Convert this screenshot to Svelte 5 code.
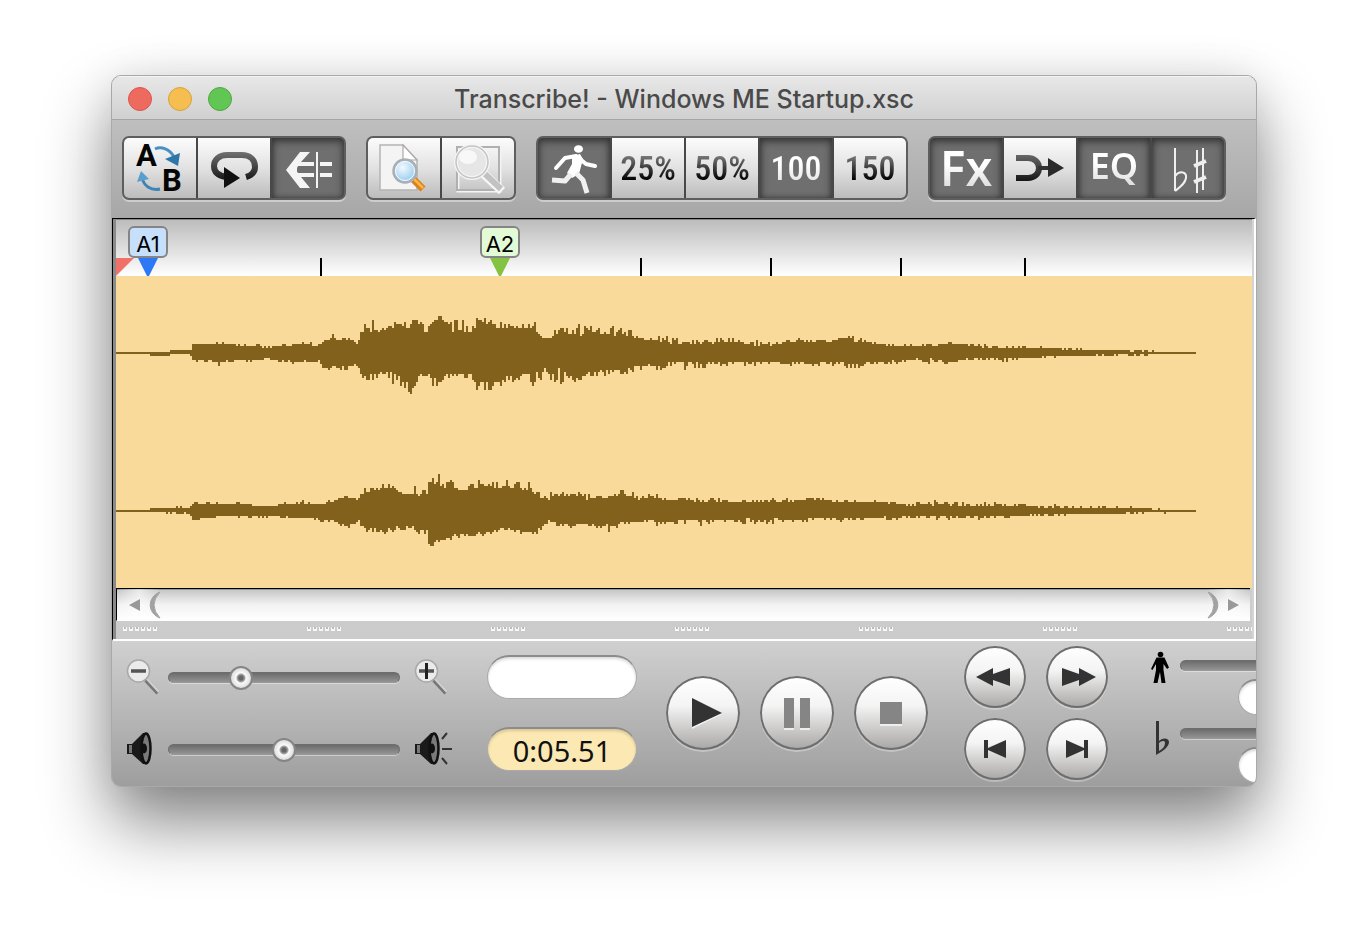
<script>
  const title = 'Transcribe! - Windows ME Startup.xsc';
  const VIEW = 1136;

  // Envelope points: x, quiet/loud amplitude above the axis, quiet/loud amplitude below it
  const left = [
    [0,1,1,1,1],[33,1,1,1,1],[34,1,1,2,3],[50,1,2,2,3],[58,3,3,1,2],[70,3,3,1,2],[74,1,3,2,3],[76,9,9,7,8],
    [94,9,9,7,9],[102,9,12,9,14],[114,8,9,7,9],[134,6,9,7,9],[150,5,8,5,7],[164,6,10,7,9],[180,8,10,8,11],
    [193,8,13,7,11],[203,6,8,7,9],[206,11,13,15,17],[217,13,21,12,17],[230,13,18,13,17],[241,9,10,11,13],
    [244,19,22,17,25],[249,21,30,22,31],[256,20,33,20,30],[270,22,30,19,31],[284,22,33,20,36],[294,24,33,33,41],
    [303,28,35,21,28],[309,19,23,21,26],[314,27,37,22,36],[325,33,37,22,35],[332,19,29,20,29],[343,22,37,20,27],
    [354,20,26,20,25],[360,28,36,29,37],[376,24,34,27,37],[390,24,32,21,32],[404,25,30,21,28],[418,23,35,19,35],
    [428,13,22,15,21],[440,17,25,11,34],[450,18,30,21,33],[462,18,30,25,28],[475,17,29,17,26],[490,17,29,17,28],
    [505,17,28,17,24],[519,14,20,13,21],[528,11,15,11,14],[540,12,17,13,18],[552,9,17,8,14],[573,9,17,9,23],
    [594,9,15,9,15],[616,9,15,9,12],[640,7,13,9,14],[655,7,12,7,11],[665,10,15,10,13],[690,10,14,8,12],
    [715,10,14,9,14],[725,15,17,9,14],[738,11,16,11,15],[749,10,14,10,13],[755,9,11,8,11],[764,8,10,9,12],
    [784,6,9,7,10],[808,6,9,5,10],[820,7,12,6,11],[829,9,13,10,13],[844,8,10,6,9],[870,5,9,5,8],[884,5,7,5,9],
    [904,5,7,5,7],[934,4,6,3,5],[962,3,5,3,3],[990,3,3,1,3],[1006,2,3,1,3],[1030,1,3,1,3],[1050,1,1,1,2],[1055,1,1,1,1],[1080,1,1,1,1]
  ];
  const right = [
    [0,1,1,1,1],[33,1,1,1,1],[34,3,3,1,1],[50,2,4,1,3],[58,3,5,1,3],[73,3,3,2,3],[76,7,9,8,9],[98,7,9,6,8],
    [112,6,7,4,6],[122,6,9,5,7],[134,5,7,5,9],[154,4,6,4,6],[167,7,9,5,7],[184,7,11,7,8],[194,7,10,6,9],
    [204,6,9,9,12],[219,9,12,9,11],[225,13,17,13,18],[234,12,14,12,16],[242,11,13,9,11],[245,18,21,15,22],
    [255,16,25,17,22],[264,21,28,18,23],[272,23,27,17,23],[285,16,23,15,19],[295,15,26,15,25],[310,16,23,18,25],
    [312,29,37,32,37],[321,24,37,29,34],[330,23,29,25,29],[341,21,34,22,28],[350,21,28,22,26],[365,24,33,20,26],
    [368,25,39,20,26],[380,23,33,15,25],[394,22,30,17,22],[407,21,31,20,25],[420,17,26,20,25],[426,11,18,13,19],
    [432,11,20,9,13],[442,13,18,9,15],[454,15,19,15,19],[464,12,19,12,15],[476,11,16,12,14],[488,12,16,13,23],
    [500,14,21,11,18],[512,15,21,11,14],[526,10,16,9,12],[543,12,21,10,17],[550,10,12,9,12],[567,12,17,8,15],
    [582,9,13,8,16],[597,9,14,8,12],[612,9,12,8,11],[634,8,10,6,14],[650,9,14,7,14],[674,9,13,8,11],
    [690,12,14,8,12],[704,11,14,6,8],[719,9,12,8,11],[740,9,10,6,9],[760,9,11,6,10],[790,5,9,5,8],[818,6,11,5,9],
    [840,5,9,5,9],[870,5,9,5,9],[910,4,8,3,7],[942,3,7,3,5],[970,3,5,2,4],[1000,2,5,2,4],[1030,2,3,1,3],[1050,1,2,1,2],[1056,1,1,1,1],[1080,1,1,1,1]
  ];

  function trace(points, axis, seed) {
    let s = seed;
    const rnd = () => {
      s = (s * 16807) % 2147483647;
      return s / 2147483647;
    };
    const snap = (v) => 1 + 2 * Math.round((v - 1) / 2);
    let d = '';
    let i = 0;
    for (let x = 0; x < 1080; x += 2) {
      while (points[i + 1][0] <= x) i++;
      const a = points[i];
      const b = points[i + 1];
      const t = (x - a[0]) / (b[0] - a[0]);
      const at = (k) => a[k] + (b[k] - a[k]) * t;
      const up = snap(at(1) + (at(2) - at(1)) * rnd() ** 1.5);
      const down = snap(at(3) + (at(4) - at(3)) * rnd() ** 1.5);
      d += `M${x} ${axis - up}h2v${up + down}h-2z`;
    }
    return d;
  }
  const wave = trace(left, 77, 4211) + trace(right, 235, 977);

  const ticks = [205, 525, 655, 785, 909];
  const markers = [
    { name: 'A1', at: 32, kind: 'blue' },
    { name: 'A2', at: 384, kind: 'green' }
  ];
  const pct = (v) => (v / VIEW) * 100 + '%';

  const groups = [
    [{ id: 'ab', label: 'Swap A and B' }, { id: 'loop', label: 'Loop' }, { id: 'back', label: 'Step back', on: true }],
    [{ id: 'find', label: 'Zoom to selection' }, { id: 'fit', label: 'Zoom to fit', off: true }],
    [
      { id: 'run', label: 'Speed', on: true },
      { id: 's25', text: '25%' },
      { id: 's50', text: '50%' },
      { id: 's100', text: '100', on: true },
      { id: 's150', text: '150' }
    ],
    [
      { id: 'fx', text: 'Fx', on: true, size: 'fx' },
      { id: 'mono', label: 'Mono mix' },
      { id: 'eq', text: 'EQ', on: true, size: 'eq' },
      { id: 'pitch', label: 'Pitch', on: true }
    ]
  ];

  let zoom = $state(29);
  let volume = $state(50);
  let speed = $state(50);
  let pitch = $state(50);
</script>

{#snippet glyph(id)}
  <svg width="72" height="60" viewBox="0 0 72 60" aria-hidden="true">
    <defs>
      <linearGradient id="dark" x1="0" y1="12" x2="0" y2="48" gradientUnits="userSpaceOnUse"><stop offset="0" stop-color="#777" /><stop offset="1" stop-color="#050505" /></linearGradient>
      <radialGradient id="lens" cx=".4" cy=".35" r=".7"><stop offset="0" stop-color="#f2faff" /><stop offset="1" stop-color="#8fc6ec" /></radialGradient>
    </defs>
    {#if id === 'ab'}
      <text x="12" y="28" class="letter">A</text>
      <text x="38" y="53" class="letter">B</text>
      <path d="M31 11C37 8 46 11 50 19" fill="none" stroke="#4b8fc0" stroke-width="3" />
      <path d="M41 21L56 15L54 28Z" fill="#2f75a8" />
      <path d="M36 51C27 53 20 48 18 40" fill="none" stroke="#3d83b5" stroke-width="3" />
      <path d="M13 44L17 33L25 41Z" fill="#5b9dcc" />
    {:else if id === 'loop'}
      <path d="M48 39C55 37 57 33 57 29C57 21 51 17 44 17H29C21 17 16 22 16 28C16 34 20 38 29 39" fill="none" stroke="url(#dark)" stroke-width="6" />
      <path d="M26 29L42 40L26 50Z" fill="#111" />
    {:else if id === 'back'}
      <path d="M14 32L28 14H38L29 24H42V28H26L24 32L26 35H42V39H29L38 50H28Z" fill="#f4f4f4" />
      <path d="M44 14h2v36h-2zM48 24h12v4h-12zM48 35h12v4h-12z" fill="#f4f4f4" />
      <path d="M16 32L28 17H33L25 28V36L33 47H28Z" fill="#f4f4f4" />
    {:else if id === 'find'}
      <path d="M12 7H35L49 22V52H12Z" fill="#f4f4f4" stroke="#b4b4b4" stroke-width="1.5" />
      <path d="M35 7V22H49Z" fill="#fff" stroke="#aaa" stroke-width="1.2" />
      <path d="M45 41L55 51" stroke="#d9811e" stroke-width="7" />
      <path d="M45 40L55 50" stroke="#ffb648" stroke-width="2.5" />
      <circle cx="37" cy="33" r="11.5" fill="url(#lens)" stroke="#a9b0b5" stroke-width="2.5" />
      <circle cx="37" cy="33" r="9.5" fill="none" stroke="#f5fbff" stroke-width="1" />
    {:else if id === 'fit'}
      <rect x="16" y="10" width="42" height="43" fill="none" stroke="#f4f4f4" stroke-width="3" />
      <rect x="15" y="9" width="42" height="43" fill="none" stroke="#b0b0b0" stroke-width="2" />
      <path d="M42 36L60 53" stroke="#f7f7f7" stroke-width="9" />
      <path d="M42 35L59 51" stroke="#c2c2c2" stroke-width="6" />
      <circle cx="30" cy="24" r="16" fill="#e6e6e6" stroke="#f5f5f5" stroke-width="4" />
      <circle cx="30" cy="24" r="16" fill="none" stroke="#c4c4c4" stroke-width="1.500" />
      <ellipse cx="26" cy="19" rx="9" ry="7" fill="#f8f8f8" />
    {:else if id === 'run'}
      <ellipse cx="40.500" cy="11" rx="4.500" ry="3.800" fill="#fff" />
      <path d="M38 18L27 20L18 30M42 21L48 26L57 28" fill="none" stroke="#fff" stroke-width="4" stroke-linecap="round" stroke-linejoin="round" />
      <path d="M34 18L42 16L45 21L41 36L34 40L29 35L34 26Z" fill="#fff" />
      <path d="M33 36L27 43L14 42M38 35L45 42L49 55" fill="none" stroke="#f0f0f0" stroke-width="5" stroke-linejoin="round" />
    {:else if id === 'mono'}
      <path d="M12 20H24C30 20 35 24 35 30C35 36 30 40 24 40H12" fill="none" stroke="url(#dark)" stroke-width="6" />
      <path d="M34 28H45V32H34Z" fill="#333" />
      <path d="M44 20L60 30L44 39Z" fill="#2a2a2a" />
    {:else}
      <path d="M23 10V53M23 38C28 32 35 34 34 40C33 46 28 49 23 53" fill="none" stroke="#f0f0f0" stroke-width="2" />
      <path d="M45 12V55M51 10V52" fill="none" stroke="#eee" stroke-width="2" />
      <path d="M42 28L54 23M42 44L54 39" fill="none" stroke="#eee" stroke-width="4" />
    {/if}
  </svg>
{/snippet}

{#snippet lens(plus)}
  <svg width="36" height="40" viewBox="0 0 36 40" aria-hidden="true">
    <path d="M20 23L32 36" stroke="#777" stroke-width="4.500" />
    <path d="M21 22L33 35" stroke="#d2d2d2" stroke-width="2" />
    <circle cx="12.500" cy="14" r="11" fill="#ebebeb" stroke="#a8a8a8" stroke-width="1.500" />
    <path d="M5 14h15" stroke="#555" stroke-width="3.500" />
    {#if plus}<path d="M12.500 6v16" stroke="#222" stroke-width="3" />{/if}
  </svg>
{/snippet}

{#snippet speaker(loud)}
  <svg width="38" height="36" viewBox="0 0 38 36" aria-hidden="true">
    <path d="M1 13H6L17 2H22V33H17L6 23H1Z" fill="#1a1a1a" />
    <path d="M3 14h3v8h-3z" fill="#777" />
    <ellipse cx="20" cy="17.500" rx="4.500" ry="15" fill="#7a7a7a" stroke="#111" stroke-width="2.500" />
    <ellipse cx="18" cy="17.500" rx="3" ry="5" fill="#111" />
    {#if loud}<path d="M28 8L33 2M28 18H38M28 27L33 33" stroke="#333" stroke-width="2" />{/if}
  </svg>
{/snippet}

<main class="window">
  <header class="titlebar">
    <div class="lights">
      <button class="light red" aria-label="Close"></button>
      <button class="light yellow" aria-label="Minimise"></button>
      <button class="light lime" aria-label="Full screen"></button>
    </div>
    <h1>{title}</h1>
  </header>

  <div class="toolbar">
    {#each groups as group}
      <div class="group">
        {#each group as b}
          <button class="tool {b.size ?? ''}" class:on={b.on} disabled={b.off} aria-label={b.label ?? b.text}>
            {#if b.text}<span>{b.text}</span>{:else}{@render glyph(b.id)}{/if}
          </button>
        {/each}
      </div>
    {/each}
  </div>

  <section class="editor">
    <div class="ruler">
      <i class="origin"></i>
      {#each ticks as t}<i class="tick" style:left={pct(t)}></i>{/each}
      {#each markers as m}
        <button class="marker {m.kind}" style:left={pct(m.at)}>
          <span>{m.name}</span>
          <svg width="20" height="18" viewBox="0 0 20 18" aria-hidden="true"><path d="M0 0H20L11 18H9Z" /></svg>
        </button>
      {/each}
    </div>
    <svg class="wave" viewBox="0 0 {VIEW} 312" preserveAspectRatio="none" aria-hidden="true">
      <path d={wave} fill="#82611c" shape-rendering="crispEdges" />
    </svg>
    <div class="scroll">
      <button aria-label="Scroll left"><svg width="44" height="30" viewBox="0 0 44 30"><path d="M12 15L23 9V21Z" fill="#999" /><path d="M43 2C30 7 30 23 43 28Q31 15 43 2Z" fill="#a2a2a2" stroke="#a2a2a2" /></svg></button>
      <div class="thumb"></div>
      <button aria-label="Scroll right"><svg width="44" height="30" viewBox="0 0 44 30"><path d="M33 15L22 9V21Z" fill="#999" /><path d="M2 2C15 7 15 23 2 28Q14 15 2 2Z" fill="#a2a2a2" stroke="#a2a2a2" /></svg></button>
    </div>
    <svg class="grip" height="18" aria-hidden="true">
      <defs>
        <pattern id="dots" x="7" y="0" width="184" height="18" patternUnits="userSpaceOnUse">
          {#each [0, 6, 12, 18, 24, 30] as x}
            <rect {x} y="6" width="4" height="4" fill="#f8f8f8" /><rect x={x + 1} y="6" width="2" height="2" fill="#bbb" />
          {/each}
        </pattern>
      </defs>
      <rect width="100%" height="18" fill="url(#dots)" />
    </svg>
  </section>

  <footer class="deck">
    <div class="levels">
      {@render lens(false)}
      <input type="range" bind:value={zoom} aria-label="Zoom" />
      {@render lens(true)}
      {@render speaker(false)}
      <input type="range" bind:value={volume} aria-label="Volume" />
      {@render speaker(true)}
    </div>

    <div class="readouts">
      <input class="pill" type="text" aria-label="Chord" />
      <output class="pill time">0:05.51</output>
    </div>

    <div class="transport">
      <button class="round big" aria-label="Play"><svg width="74" height="74" viewBox="0 0 74 74"><path d="M26 24L56 38L26 53Z" fill="#fff" opacity=".7" /><path d="M26 22L56 37L26 51Z" fill="#333" /></svg></button>
      <button class="round big" aria-label="Pause"><svg width="74" height="74" viewBox="0 0 74 74"><path d="M24 24h10v30h-10zM40 24h10v30h-10z" fill="#eee" /><path d="M24 22h10v30h-10zM40 22h10v30h-10z" fill="#858585" /></svg></button>
      <button class="round big" aria-label="Stop"><svg width="74" height="74" viewBox="0 0 74 74"><path d="M26 28h22v22h-22z" fill="#eee" /><path d="M26 26h22v22h-22z" fill="#858585" /></svg></button>
    </div>

    <div class="skips">
      <button class="round" aria-label="Rewind"><svg width="62" height="62" viewBox="0 0 62 62"><path d="M12 31L29 22V28L46 22V40L29 34V40Z" fill="#333" /></svg></button>
      <button class="round" aria-label="Fast forward"><svg width="62" height="62" viewBox="0 0 62 62"><path d="M50 31L33 22V28L16 22V40L33 34V40Z" fill="#333" /></svg></button>
      <button class="round" aria-label="Previous marker"><svg width="62" height="62" viewBox="0 0 62 62"><path d="M20 22h4v8L42 22V40L24 32V40H20Z" fill="#333" /></svg></button>
      <button class="round" aria-label="Next marker"><svg width="62" height="62" viewBox="0 0 62 62"><path d="M42 22h-4v8L20 22V40L38 32V40H42Z" fill="#333" /></svg></button>
    </div>

    <div class="tuning">
      <div class="tune">
        <svg width="20" height="34" viewBox="0 0 20 34" aria-hidden="true"><circle cx="10.500" cy="3.500" r="2.800" /><path d="M6.500 6.500h8l4.500 10-2 1.500-3.500-5v6l2 13h-4l-1.500-11-2.500 11H3.500L6 19v-6l-3.500 6-1.500-1z" /></svg>
        <div class="field"><input type="range" bind:value={speed} aria-label="Speed" /><input class="pill" type="text" aria-label="Speed value" /></div>
      </div>
      <div class="tune">
        <svg width="20" height="36" viewBox="0 0 20 36" aria-hidden="true"><path d="M6 2h3v20c4-4 10-3 10 1 0 5-6 9-13 13zM9 24v8c4-2 6-5 6-8 0-3-4-2-6 0z" fill="#333" fill-rule="evenodd" /></svg>
        <div class="field"><input type="range" bind:value={pitch} aria-label="Pitch" /><input class="pill" type="text" aria-label="Pitch value" /></div>
      </div>
    </div>
  </footer>
</main>

<style>
  :global(body) {
    display: flow-root;
    min-height: 100vh;
    background: #fff;
  }
  .window, .window :global(*) {
    box-sizing: border-box;
  }
  .window {
    margin: 75px 111px;
    border: 1px solid #a9a9a9;
    border-radius: 10px;
    overflow: hidden;
    font-family: Inter, "Liberation Sans", sans-serif;
    background: #bbb;
    box-shadow: 0 36px 68px rgba(0, 0, 0, 0.48), 0 0 40px rgba(0, 0, 0, 0.08);
  }
  button {
    padding: 0;
    border: 0;
    background: none;
    color: inherit;
    font: inherit;
  }
  svg {
    display: block;
    flex: none;
  }

  .titlebar {
    display: grid;
    grid-template-columns: 1fr auto 1fr;
    align-items: center;
    height: 44px;
    padding: 2px 16px 0;
    border-bottom: 1px solid #a5a5a5;
    background: linear-gradient(#e8e8e8, #d0d0d0);
    box-shadow: inset 0 1px #f4f4f4;
  }
  .lights {
    display: flex;
    gap: 16px;
  }
  .light {
    width: 24px;
    height: 24px;
    border: 1px solid;
    border-radius: 50%;
  }
  .red { background: #ee6a5f; border-color: #d6584d; }
  .yellow { background: #f6be50; border-color: #d8a23c; }
  .lime { background: #62c655; border-color: #4fa73f; }
  h1 {
    margin: 0;
    font-size: 25px;
    line-height: 30px;
    font-weight: 500;
    color: #4a4a4a;
    white-space: nowrap;
  }

  .toolbar {
    display: flex;
    gap: 20px;
    padding: 16px 10px 18px;
    background: linear-gradient(#bfbfbf, #a7a7a7);
  }
  .group {
    display: flex;
    gap: 2px;
    border: 2px solid #5e5e5e;
    border-radius: 7px;
    overflow: hidden;
    background: #484848;
    box-shadow: 0 2px rgba(255, 255, 255, 0.4);
  }
  .tool {
    display: grid;
    place-items: center;
    width: 72px;
    height: 60px;
    background: linear-gradient(#fcfcfc, #e2e2e2 50%, #bcbcbc);
    font: 500 34px "Liberation Sans Narrow", "Roboto Condensed", sans-serif;
  }
  .tool span {
    background: linear-gradient(#777 20%, #000 80%);
    background-clip: text;
    color: transparent;
    line-height: 40px;
  }
  .tool.on {
    background: #6f6f6f;
    box-shadow: inset 0 3px 8px #333, inset 0 0 5px #444;
  }
  .tool.on span {
    background: linear-gradient(#fff 40%, #ddd);
    background-clip: text;
  }
  .tool.fx { font: 600 48px "Noto Sans", sans-serif; }
  .tool.eq { font: 600 36px "Noto Sans", sans-serif; padding-bottom: 4px; }
  .letter {
    font: 700 31px Roboto, sans-serif;
    fill: #050505;
  }

  .editor {
    padding: 0 2px 0 3px;
    border: 1px solid #000;
    border-right: 2px solid #fff;
    border-bottom: 2px solid #fff;
    box-shadow: inset 3px 0 #8a8a8a, inset -2px 0 #d4d4d4;
    background: linear-gradient(#dedede, #cbcbcb);
  }
  .ruler {
    position: relative;
    height: 57px;
    background: linear-gradient(#bcbcbc, #fff);
    border-top: 1px solid #888;
  }
  .tick {
    position: absolute;
    bottom: 0;
    width: 2px;
    height: 18px;
    margin-left: -1px;
    background: #000;
  }
  .origin {
    position: absolute;
    left: 0;
    bottom: 0;
    width: 18px;
    height: 18px;
    background: #f17168;
    clip-path: polygon(0 0, 100% 0, 0 100%);
  }
  .marker {
    position: absolute;
    bottom: 0;
    display: flex;
    flex-direction: column;
    align-items: center;
    width: 40px;
    margin-left: -20px;
  }
  .marker span {
    width: 40px;
    height: 32px;
    border: 2px solid #858585;
    border-radius: 6px;
    font-size: 22px;
    line-height: 32px;
    color: #000;
  }
  .blue span { background: #c6dffb; }
  .green span { background: #e2fad6; }
  .blue svg { fill: #2c78f6; }
  .green svg { fill: #84c341; }

  .wave {
    width: 100%;
    height: 312px;
    background: #fada9a;
  }
  .scroll {
    display: flex;
    height: 33px;
    margin-right: 2px;
    border-top: 1px solid #000;
    border-left: 1px solid #000;
    border-bottom: 1px solid #fff;
    background: linear-gradient(#c4c4c4, #f2f2f2 50%, #fff);
    box-shadow: inset 0 1px #999;
  }
  .scroll button {
    background: linear-gradient(90deg, transparent, rgba(255, 255, 255, 0.6), transparent);
  }
  .thumb {
    flex: 1;
  }
  .grip {
    width: 100%;
  }

  .deck {
    display: flex;
    align-items: flex-start;
    height: 145px;
    padding-left: 14px;
    overflow: hidden;
    background: linear-gradient(#d0d0d0, #9e9e9e);
  }
  .levels {
    display: grid;
    flex: none;
    grid-template: 72px 72px / 42px 246px 38px;
    align-items: center;
  }
  input[type='range'] {
    appearance: none;
    width: 232px;
    height: 24px;
    margin: 0;
    background: none;
  }
  input[type='range']::-webkit-slider-runnable-track {
    height: 11px;
    border: 1px solid #6d6d6d;
    border-bottom-color: #999;
    border-radius: 6px;
    background: linear-gradient(#6c6c6c, #939393);
    box-shadow: 0 1px rgba(255, 255, 255, 0.4);
  }
  input[type='range']::-webkit-slider-thumb {
    appearance: none;
    width: 24px;
    height: 24px;
    margin-top: -7px;
    border: 2px solid #858585;
    border-radius: 50%;
    background: radial-gradient(circle, #666 2px, #aaa 4px, #fafafa 5px, #ddd 10px);
  }
  .readouts {
    display: grid;
    flex: none;
    grid-template-rows: 72px 72px;
    align-items: center;
    margin-left: 35px;
  }
  .pill {
    display: block;
    width: 150px;
    height: 44px;
    padding: 0 16px;
    border: 1px solid #aaa;
    border-top: 2px solid #8c8c8c;
    border-radius: 22px;
    background: #fff;
    box-shadow: inset 0 2px 3px rgba(0, 0, 0, 0.15);
  }
  .time {
    padding: 0;
    background: #fce8b2;
    color: #111;
    font: 29px/44px "Noto Sans", sans-serif;
    text-align: center;
  }
  .transport {
    display: flex;
    flex: none;
    gap: 20px;
    margin: 35px 36px 0 29px;
  }
  .round {
    display: grid;
    place-items: center;
    width: 62px;
    height: 62px;
    border-radius: 50%;
    background: linear-gradient(#fff, #f4f4f4 40%, #a8a6a4);
    box-shadow: inset 0 0 0 2px #6e6e6e, 0 2px rgba(255, 255, 255, 0.3);
  }
  .big {
    width: 74px;
    height: 74px;
  }
  .skips {
    display: grid;
    flex: none;
    grid-template: 72px 72px / 62px 62px;
    column-gap: 20px;
    align-items: center;
  }
  .tuning {
    flex: none;
    margin: 10px 0 0 42px;
  }
  .tune {
    display: flex;
    gap: 10px;
    height: 68px;
  }
  .field {
    display: grid;
    grid-template-rows: 28px 36px;
    align-items: center;
  }
  .field .pill {
    width: 110px;
    height: 36px;
    margin-left: 58px;
  }
</style>
